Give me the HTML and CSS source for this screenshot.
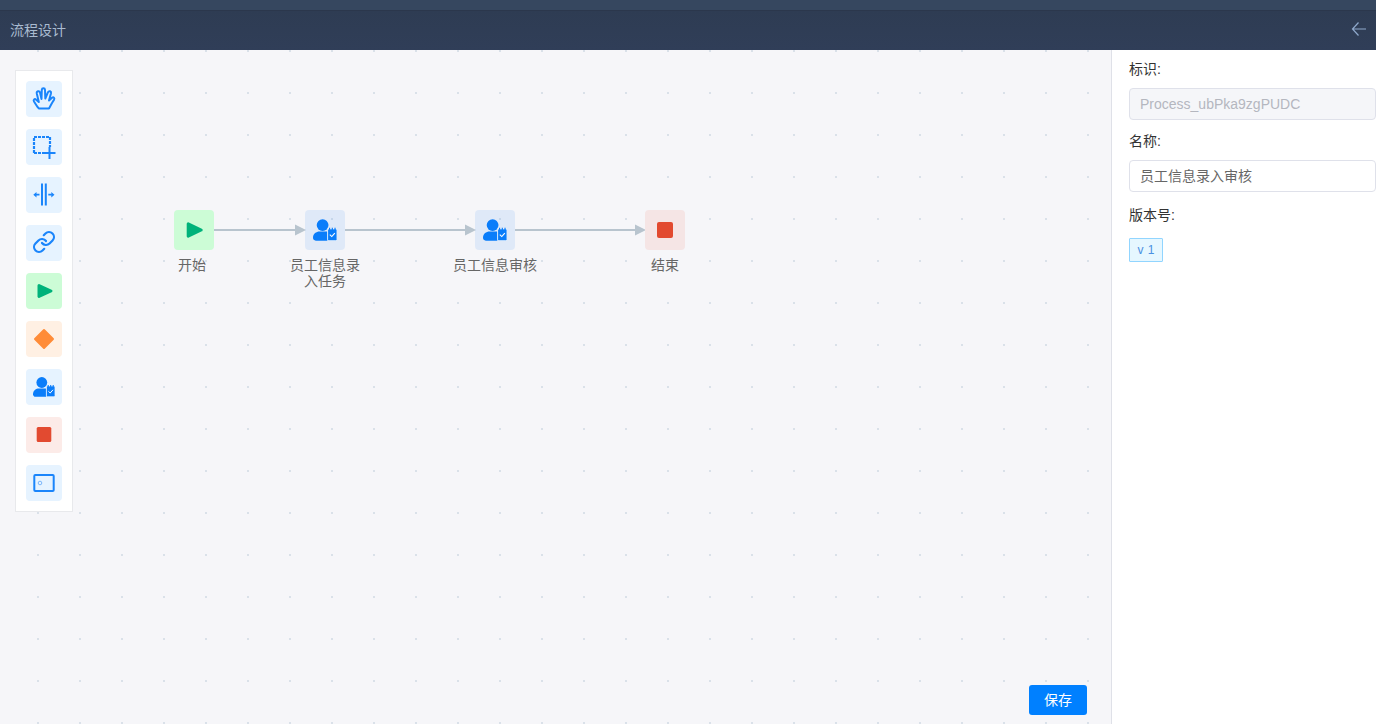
FILE: index.html
```html
<!DOCTYPE html>
<html lang="zh-CN">
<head>
<meta charset="utf-8">
<title>流程设计</title>
<link rel="stylesheet" href="styles.css">
</head>
<body>
<svg class="defs" width="0" height="0" aria-hidden="true">
  <defs>
    <pattern id="dots" x="37" y="0" width="42" height="42" patternUnits="userSpaceOnUse">
      <rect width="2" height="2" fill="#dae1e9"/>
    </pattern>
    <symbol id="task" viewBox="0 0 22 20">
      <circle cx="8.800" cy="5.500" r="5.400" fill="#0a7dfa"/>
      <path d="M0 17.200C0 13.400 3 11.400 6 11.400H12.400C12.800 11.400 13 11.500 13.200 11.600V19.800H2.600C1 19.800 0 18.700 0 17.200Z" fill="#0a7dfa"/>
      <rect x="13.400" y="9" width="8.600" height="10.800" rx="1" fill="#0a7dfa" stroke="#fff" stroke-width=".7"/>
      <path d="M15.200 8V10M17.700 8V10M20.200 8V10" stroke="#0a7dfa" stroke-width="1.100"/>
      <path d="M15.400 14.300L17.200 16L20 12.800" fill="none" stroke="#fff" stroke-width="1"/>
    </symbol>
  </defs>
</svg>
<div class="top-strip"></div>
<header class="title-bar">
  <span class="title">流程设计</span>
  <svg class="back" width="16" height="16" viewBox="0 0 16 16"><path d="M7.500 1.500L1.500 8L7.500 14.500M1.500 8H15" fill="none" stroke="#8fa9cc" stroke-width="1.200"/></svg>
</header>
<main class="main">
  <section class="canvas">
    <svg class="grid" width="100%" height="100%"><rect width="100%" height="100%" fill="url(#dots)"/></svg>

    <div class="palette">
      <div class="tool tool-blue">
        <svg viewBox="0 0 36 36"><path d="M13 27.500C11 26 9.500 22.500 8 20.500C7 18.800 8.600 17.200 10.200 18.700L12.800 21L10.800 12.500C10.300 10 13.400 9.500 14 11.500L15.500 18L15.800 8.800C16 6.800 18.900 6.800 19 8.800L19.300 17.500L22 11.200C23 9.300 25.500 10.300 25 12.300L23 19.500L26 16.800C27.500 15.500 29 17 28 18.800C26.300 21 24.500 25 23 27.500Z" fill="none" stroke="#1a85fb" stroke-width="2" stroke-linejoin="round"/></svg>
      </div>
      <div class="tool tool-blue">
        <svg viewBox="0 0 36 36"><path d="M8 24V8H24V18M8 24H18" fill="none" stroke="#1a85fb" stroke-width="2.200" stroke-dasharray="3 1"/><path d="M23.500 18V30M17.500 24H29.500" stroke="#1a85fb" stroke-width="2"/></svg>
      </div>
      <div class="tool tool-blue">
        <svg viewBox="0 0 36 36"><path d="M16 6.500V28.500M19.800 6.500V28.500" stroke="#1a85fb" stroke-width="2"/><path d="M10 17.700H13.500M22.300 17.700H25.800" stroke="#1a85fb" stroke-width="1.800"/><path d="M7.300 17.700L10.500 14.900V20.500ZM28.500 17.700L25.300 14.900V20.500Z" fill="#1a85fb"/></svg>
      </div>
      <div class="tool tool-blue">
        <svg viewBox="0 0 36 36"><g transform="translate(6 5)" fill="none" stroke="#1a85fb" stroke-width="2.200" stroke-linecap="round"><path d="M10 13a5 5 0 0 0 7.540.540l3-3a5 5 0 0 0-7.070-7.070l-1.720 1.710"/><path d="M14 11a5 5 0 0 0-7.540-.540l-3 3a5 5 0 0 0 7.070 7.070l1.710-1.710"/></g></svg>
      </div>
      <div class="tool tool-green">
        <svg viewBox="0 0 36 36"><path d="M13 12.500L25 18L13 23.500Z" fill="#00b27a" stroke="#00b27a" stroke-width="3" stroke-linejoin="round"/></svg>
      </div>
      <div class="tool tool-orange">
        <svg viewBox="0 0 36 36"><path d="M18 9L27 18L18 27L9 18Z" fill="#ff8c38" stroke="#ff8c38" stroke-width="2" stroke-linejoin="round"/></svg>
      </div>
      <div class="tool tool-blue">
        <svg class="task-tool" viewBox="0 0 22 20"><use href="#task"/></svg>
      </div>
      <div class="tool tool-red">
        <svg viewBox="0 0 36 36"><rect x="10.700" y="10" width="14.600" height="15" rx="1.500" fill="#e24a30"/></svg>
      </div>
      <div class="tool tool-blue">
        <svg viewBox="0 0 36 36"><rect x="8.300" y="10" width="19.400" height="16" rx="1" fill="none" stroke="#1a85fb" stroke-width="2"/><circle cx="14" cy="18" r="1.800" fill="none" stroke="#7ab6fb"/></svg>
      </div>
    </div>

    <svg class="edges" width="700" height="300" viewBox="0 0 700 300">
      <g stroke="#b8c4ce" stroke-width="2">
        <path d="M214 180H296M345 180H466M515 180H636"/>
      </g>
      <g fill="#b8c4ce">
        <path d="M295 174.500L306 180L295 185.500Z"/>
        <path d="M465 174.500L476 180L465 185.500Z"/>
        <path d="M635 174.500L646 180L635 185.500Z"/>
      </g>
    </svg>

    <div class="node node-start n1">
      <svg viewBox="0 0 40 40"><path d="M14.200 13.800L27.200 20L14.200 26.200Z" fill="#00b27a" stroke="#00b27a" stroke-width="3" stroke-linejoin="round"/></svg>
    </div>
    <div class="label l1">开始</div>
    <div class="node node-task n2"><svg class="task-node" viewBox="0 0 22 20"><use href="#task"/></svg></div>
    <div class="label l2">员工信息录入任务</div>
    <div class="node node-task n3"><svg class="task-node" viewBox="0 0 22 20"><use href="#task"/></svg></div>
    <div class="label l3">员工信息审核</div>
    <div class="node node-end n4">
      <svg viewBox="0 0 40 40"><rect x="12" y="12" width="16" height="16" rx="2" fill="#e24a30"/></svg>
    </div>
    <div class="label l4">结束</div>

    <button class="save" type="button">保存</button>
  </section>

  <aside class="panel">
    <div class="field-label">标识:</div>
    <div class="input input-disabled">Process_ubPka9zgPUDC</div>
    <div class="field-label">名称:</div>
    <div class="input">员工信息录入审核</div>
    <div class="field-label version">版本号:</div>
    <span class="tag">v 1</span>
  </aside>
</main>
</body>
</html>
```
FILE: styles.css
```css
* { box-sizing: border-box; }
html, body {
  margin: 0;
  height: 724px;
  overflow: hidden;
  font-family: "Liberation Sans", "Noto Sans CJK SC", sans-serif;
  font-size: 14px;
  color: #333;
  background: #fff;
}
body { display: flex; flex-direction: column; }
.defs { position: absolute; }

.top-strip { height: 10px; background: #36475f; }
.title-bar {
  height: 40px;
  display: flex;
  align-items: center;
  justify-content: space-between;
  padding: 0 9px 1px 10px;
  background: linear-gradient(#2e3c53, #303e58);
  border-top: 1px solid #2b374c;
}
.title { color: #a9bbd0; font-size: 14px; line-height: 38px; }
.back { display: block; margin-top: -2px; }

.main { flex: 1; display: flex; min-height: 0; }
.canvas { position: relative; flex: 0 0 1111px; background: #f6f6f9; overflow: hidden; }
.grid { position: absolute; left: 0; top: 0; }

.palette {
  position: absolute;
  left: 15px;
  top: 20px;
  width: 58px;
  padding: 10px;
  display: flex;
  flex-direction: column;
  gap: 12px;
  background: #fff;
  border: 1px solid #e8e9ec;
}
.tool {
  width: 36px;
  height: 36px;
  border-radius: 4px;
  display: flex;
  align-items: center;
  justify-content: center;
}
.tool > svg { display: block; width: 36px; height: 36px; }
.tool > svg.task-tool { width: 22px; height: 20px; }
.tool-blue { background: #e6f3ff; }
.tool-green { background: #ccfcd6; }
.tool-orange { background: #fff0e3; }
.tool-red { background: #fcebe8; }

.edges { position: absolute; left: 0; top: 0; }

.node {
  position: absolute;
  top: 160px;
  width: 40px;
  height: 40px;
  border-radius: 4px;
  display: flex;
  align-items: center;
  justify-content: center;
}
.node > svg { display: block; width: 40px; height: 40px; }
.node > svg.task-node { width: 24px; height: 22px; }
.n1 { left: 174px; }
.n2 { left: 305px; }
.n3 { left: 475px; }
.n4 { left: 645px; }
.node-start { background: #ccfcd6; }
.node-task { background: rgba(0, 110, 240, .09); }
.node-end { background: #f5e5e5; }

.label {
  position: absolute;
  top: 207px;
  color: #666;
  font-size: 14px;
  line-height: 16px;
  text-align: center;
}
.l1 { left: 178px; width: 28px; }
.l2 { left: 290px; width: 70px; }
.l3 { left: 453px; width: 84px; }
.l4 { left: 651px; width: 28px; }

.save {
  position: absolute;
  left: 1029px;
  top: 635px;
  width: 58px;
  height: 30px;
  padding: 0 0 2px;
  border: 0;
  border-radius: 3px;
  background: #0080ff;
  color: #fff;
  font: inherit;
  font-size: 14px;
}

.panel {
  flex: 1;
  min-width: 0;
  padding: 9px 0 0 17px;
  border-left: 1px solid #dfe1e8;
  background: #fff;
}
.field-label { height: 20px; line-height: 20px; font-size: 14px; color: #333; margin-bottom: 9px; }
.input {
  height: 32px;
  margin-bottom: 11px;
  padding: 0 10px;
  border: 1px solid #dfe1ea;
  border-radius: 4px;
  background: #fff;
  line-height: 30px;
  color: #666;
  font-size: 14px;
}
.input-disabled { background: #f5f6f9; color: #b4b7bf; }
.version { margin-top: 13px; margin-bottom: 13px; }
.tag {
  display: inline-block;
  width: 34px;
  height: 24px;
  line-height: 22px;
  text-align: center;
  font-size: 12px;
  word-spacing: 1px;
  color: #4a90e2;
  background: #e6f7ff;
  border: 1px solid #91d5ff;
  border-radius: 1px;
}
```
